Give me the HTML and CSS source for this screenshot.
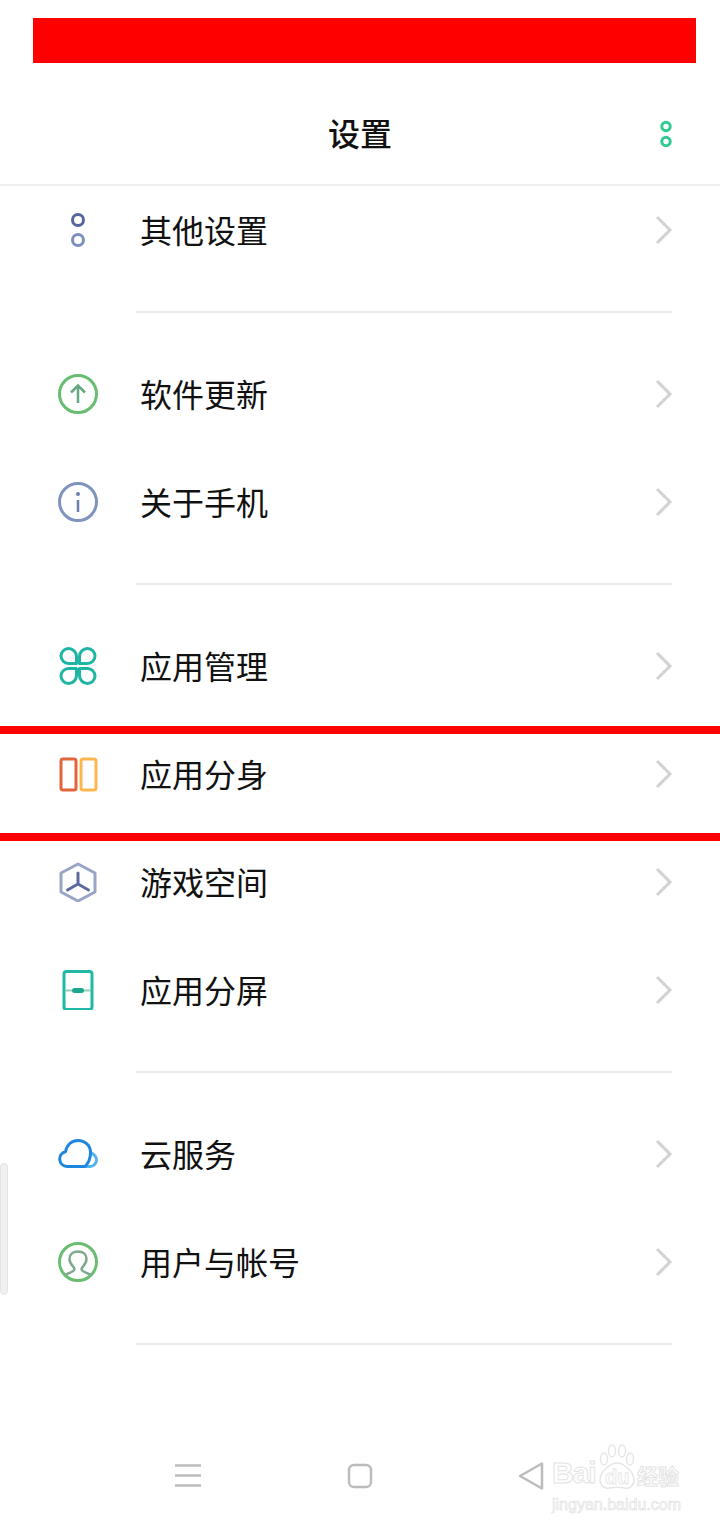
FILE: index.html
```html
<!DOCTYPE html>
<html lang="en">
<head>
    <meta charset="UTF-8">
    <meta name="viewport" content="width=device-width, initial-scale=1.0">
    <title>设置</title>
    <link rel="stylesheet" href="styles.css">
</head>
<body>
    <div class="phone">
        <div class="status-bar"><div class="status-mask"></div></div>

        <header class="title-bar">
            <h1 class="title">设置</h1>
            <svg class="more" width="12" height="28" viewBox="0 0 12 28">
                <circle cx="6" cy="6.500" r="4.200" fill="none" stroke="#2fcb90" stroke-width="3"/>
                <circle cx="6" cy="21.500" r="4.200" fill="none" stroke="#2fcb90" stroke-width="3"/>
            </svg>
        </header>

        <main class="list">
            <section class="group">
                <div class="row">
                    <svg class="icon" width="40" height="40" viewBox="0 0 40 40">
                        <circle cx="20" cy="10" r="5.500" fill="none" stroke="#56669a" stroke-width="3"/>
                        <circle cx="20" cy="30" r="5.500" fill="none" stroke="#7f8fbd" stroke-width="3"/>
                    </svg>
                    <span class="label">其他设置</span>
                    <svg class="chevron" width="18" height="30" viewBox="0 0 18 30"><path d="M2 2l13 13L2 28" fill="none" stroke="#d2d2d2" stroke-width="3"/></svg>
                </div>
            </section>

            <section class="group">
                <div class="row">
                    <svg class="icon" width="40" height="40" viewBox="0 0 40 40">
                        <circle cx="20" cy="20" r="18.500" fill="none" stroke="#68bd70" stroke-width="3"/>
                        <path d="M20 29V12M13 18.500L20 11.500l7 7" fill="none" stroke="#62a883" stroke-width="2.500"/>
                    </svg>
                    <span class="label">软件更新</span>
                    <svg class="chevron" width="18" height="30" viewBox="0 0 18 30"><path d="M2 2l13 13L2 28" fill="none" stroke="#d2d2d2" stroke-width="3"/></svg>
                </div>
                <div class="row">
                    <svg class="icon" width="40" height="40" viewBox="0 0 40 40">
                        <circle cx="20" cy="20" r="18.500" fill="none" stroke="#7f93bf" stroke-width="3"/>
                        <circle cx="20" cy="12" r="2" fill="#6a7fb0"/>
                        <path d="M20 18v12" fill="none" stroke="#6a7fb0" stroke-width="2.500"/>
                    </svg>
                    <span class="label">关于手机</span>
                    <svg class="chevron" width="18" height="30" viewBox="0 0 18 30"><path d="M2 2l13 13L2 28" fill="none" stroke="#d2d2d2" stroke-width="3"/></svg>
                </div>
            </section>

            <section class="group">
                <div class="row">
                    <svg class="icon" width="40" height="40" viewBox="0 0 40 40">
                        <g fill="none" stroke="#1fb5a5" stroke-width="3" stroke-linejoin="round">
                            <path d="M10.500 2.500a8 8 0 0 1 8 8v7h-8a7.500 7.500 0 0 1 0-15z"/>
                            <path d="M29.500 2.500a8 8 0 0 0-8 8v7h8a7.500 7.500 0 0 0 0-15z"/>
                            <path d="M10.500 37.500a8 8 0 0 0 8-8v-7h-8a7.500 7.500 0 0 0 0 15z"/>
                            <path d="M29.500 37.500a8 8 0 0 1-8-8v-7h8a7.500 7.500 0 0 1 0 15z"/>
                        </g>
                    </svg>
                    <span class="label">应用管理</span>
                    <svg class="chevron" width="18" height="30" viewBox="0 0 18 30"><path d="M2 2l13 13L2 28" fill="none" stroke="#d2d2d2" stroke-width="3"/></svg>
                </div>
                <div class="row">
                    <svg class="icon" width="40" height="40" viewBox="0 0 40 40">
                        <rect x="3" y="5" width="15" height="31" rx="2" fill="none" stroke="#e2653a" stroke-width="3"/>
                        <rect x="23" y="5" width="15" height="31" rx="2" fill="none" stroke="#fbb650" stroke-width="3"/>
                    </svg>
                    <span class="label">应用分身</span>
                    <svg class="chevron" width="18" height="30" viewBox="0 0 18 30"><path d="M2 2l13 13L2 28" fill="none" stroke="#d2d2d2" stroke-width="3"/></svg>
                </div>
                <div class="row">
                    <svg class="icon" width="40" height="40" viewBox="0 0 40 40">
                        <path d="M20 2L37 11v19L20 39 3 30V11z" fill="none" stroke="#99a5c6" stroke-width="3" stroke-linejoin="round"/>
                        <path d="M20 11v11M20 22L9.500 28M20 22l10.500 6" fill="none" stroke="#5c6b9f" stroke-width="3" stroke-linecap="round"/>
                    </svg>
                    <span class="label">游戏空间</span>
                    <svg class="chevron" width="18" height="30" viewBox="0 0 18 30"><path d="M2 2l13 13L2 28" fill="none" stroke="#d2d2d2" stroke-width="3"/></svg>
                </div>
                <div class="row">
                    <svg class="icon" width="40" height="40" viewBox="0 0 40 40">
                        <rect x="6" y="1.500" width="28" height="38" rx="2.500" fill="none" stroke="#1fb9a5" stroke-width="3"/>
                        <path d="M7 20.500h26" stroke="#8fd0b0" stroke-width="2"/>
                        <rect x="14" y="18" width="12" height="5" rx="2.500" fill="#1aa893"/>
                    </svg>
                    <span class="label">应用分屏</span>
                    <svg class="chevron" width="18" height="30" viewBox="0 0 18 30"><path d="M2 2l13 13L2 28" fill="none" stroke="#d2d2d2" stroke-width="3"/></svg>
                </div>
            </section>

            <section class="group">
                <div class="row">
                    <svg class="icon" width="40" height="40" viewBox="0 0 40 40">
                        <path d="M33 19c3 1 5.500 4 5.500 7 0 3.500-3 6.500-6.500 6.500h-5" fill="none" stroke="#52b4ee" stroke-width="3"/>
                        <path d="M9 32.500a7.500 7.500 0 0 1-1.500-14.800C9 10.500 14 6.500 20 6.500c7 0 12.500 5 12.500 12 0 4-1.500 10-5.500 14z" fill="none" stroke="#1f86e0" stroke-width="3" stroke-linejoin="round"/>
                    </svg>
                    <span class="label">云服务</span>
                    <svg class="chevron" width="18" height="30" viewBox="0 0 18 30"><path d="M2 2l13 13L2 28" fill="none" stroke="#d2d2d2" stroke-width="3"/></svg>
                </div>
                <div class="row">
                    <svg class="icon" width="40" height="40" viewBox="0 0 40 40">
                        <circle cx="20" cy="20" r="18.500" fill="none" stroke="#68bd70" stroke-width="3"/>
                        <path d="M7 33c5-3 9.500-3 9.500-6 0-2-5-4.500-5-10 0-4.500 3.500-7.500 8.500-7.500s8.500 3 8.500 7.500c0 5.500-5 8-5 10 0 3 4.500 3 9.500 6" fill="none" stroke="#7fa88f" stroke-width="2.500"/>
                    </svg>
                    <span class="label">用户与帐号</span>
                    <svg class="chevron" width="18" height="30" viewBox="0 0 18 30"><path d="M2 2l13 13L2 28" fill="none" stroke="#d2d2d2" stroke-width="3"/></svg>
                </div>
            </section>
        </main>

        <nav class="nav-bar">
            <div class="nav-item">
                <svg width="26" height="26" viewBox="0 0 26 26"><path d="M0 2.500h26M0 12.500h26M0 22.500h26" stroke="#bdbdbd" stroke-width="2.500"/></svg>
            </div>
            <div class="nav-item">
                <svg width="26" height="26" viewBox="0 0 26 26"><rect x="2" y="2" width="22" height="22" rx="5" fill="none" stroke="#bdbdbd" stroke-width="2.500"/></svg>
            </div>
            <div class="nav-item nav-back">
                <svg width="28" height="30" viewBox="0 0 28 30"><path d="M25 2.500v25L3 15z" fill="none" stroke="#bdbdbd" stroke-width="2.500" stroke-linejoin="round"/></svg>
            </div>
        </nav>

        <!-- red marks drawn over the screenshot -->
        <div class="mark mark-top"></div>
        <div class="mark mark-bottom"></div>

        <div class="scroll-thumb"></div>

        <div class="watermark">
            <div class="wm-top">
                <span class="wm-latin">Bai</span>
                <div class="wm-paw">
                    <svg width="40" height="46" viewBox="0 0 40 46">
                        <g fill="#fff" stroke="#e6e6e6" stroke-width="1.500">
                            <ellipse cx="7" cy="15" rx="3.500" ry="6"/>
                            <ellipse cx="15" cy="7" rx="3.500" ry="6"/>
                            <ellipse cx="25" cy="7" rx="3.500" ry="6"/>
                            <ellipse cx="33" cy="15" rx="3.500" ry="6"/>
                            <path d="M20 19c7 0 17 9 17 17 0 6-5 9-9 8-5-1-11-1-16 0-4 1-9-2-9-8 0-8 10-17 17-17z"/>
                        </g>
                    </svg>
                    <span class="wm-du">du</span>
                </div>
                <span class="wm-cn">经验</span>
            </div>
            <div class="wm-url">jingyan.baidu.com</div>
        </div>
    </div>
</body>
</html>
```

FILE: styles.css
```css
* {
    box-sizing: border-box;
}

body {
    margin: 0;
    background: #fff;
    font-family: "Noto Sans CJK SC", "Noto Sans", sans-serif;
    color: #111;
}

.phone {
    position: relative;
    width: 720px;
    height: 1520px;
    overflow: hidden;
    background: #fff;
}

.status-bar {
    height: 84px;
    padding: 18px 24px 0 33px;
}

.status-mask {
    height: 45px;
    background: #ff0000;
}

.title-bar {
    position: relative;
    height: 102px;
    border-bottom: 2px solid #efefef;
    display: flex;
    justify-content: center;
    align-items: center;
}

.title {
    margin: 0 0 4px;
    font-size: 32px;
    font-weight: 500;
    line-height: 40px;
    color: #111;
}

.more {
    position: absolute;
    right: 48px;
    top: 36px;
}

.list {
    margin-top: -10px;
}

.group {
    padding-bottom: 29px;
    margin-bottom: 27px;
    position: relative;
}

.group::after {
    content: "";
    position: absolute;
    left: 136px;
    right: 48px;
    bottom: 0;
    height: 2px;
    background: #e9e9e9;
}

.row {
    height: 108px;
    display: flex;
    align-items: center;
    padding: 0 47px 0 58px;
}

.icon {
    flex: none;
}

.label {
    flex: 1;
    margin: 0 0 3px 42px;
    font-size: 32px;
    line-height: 44px;
    color: #111;
}

.chevron {
    flex: none;
}

.nav-bar {
    position: absolute;
    left: 102px;
    bottom: 29px;
    display: flex;
}

.nav-item {
    width: 172px;
    height: 30px;
    display: flex;
    justify-content: center;
    align-items: center;
}

.nav-back {
    padding-right: 3px;
}

.mark {
    position: absolute;
    left: 0;
    width: 720px;
    height: 8px;
    background: #ff0000;
}

.mark-top {
    top: 726px;
}

.mark-bottom {
    top: 833px;
}

.scroll-thumb {
    position: absolute;
    left: 0;
    top: 1163px;
    width: 8px;
    height: 132px;
    background: #f0f0f0;
    border: 1px solid #e4e4e4;
    border-radius: 4px;
}

.watermark {
    position: absolute;
    left: 552px;
    top: 1444px;
    width: 130px;
}

.wm-top {
    display: flex;
    align-items: flex-end;
    height: 46px;
}

.wm-latin {
    width: 45px;
    flex: none;
    font-family: "Liberation Sans", sans-serif;
    font-size: 30px;
    font-weight: 700;
    line-height: 34px;
    letter-spacing: -1px;
    color: #fff;
    -webkit-text-stroke: 1px #e4e4e4;
}

.wm-paw {
    position: relative;
    flex: none;
    width: 40px;
    height: 46px;
}

.wm-du {
    position: absolute;
    left: 8px;
    top: 22px;
    font-family: "Liberation Sans", sans-serif;
    font-size: 20px;
    font-weight: 700;
    line-height: 22px;
    color: #fff;
    -webkit-text-stroke: 0.8px #e4e4e4;
}

.wm-cn {
    margin: 0 0 1px 0;
    font-size: 21px;
    font-weight: 700;
    line-height: 28px;
    white-space: nowrap;
    color: #fff;
    -webkit-text-stroke: 1px #e4e4e4;
}

.wm-url {
    margin-top: 5px;
    font-family: "Liberation Sans", sans-serif;
    font-size: 16px;
    line-height: 20px;
    white-space: nowrap;
    color: #fff;
    -webkit-text-stroke: 0.7px #e2e2e2;
}
```
